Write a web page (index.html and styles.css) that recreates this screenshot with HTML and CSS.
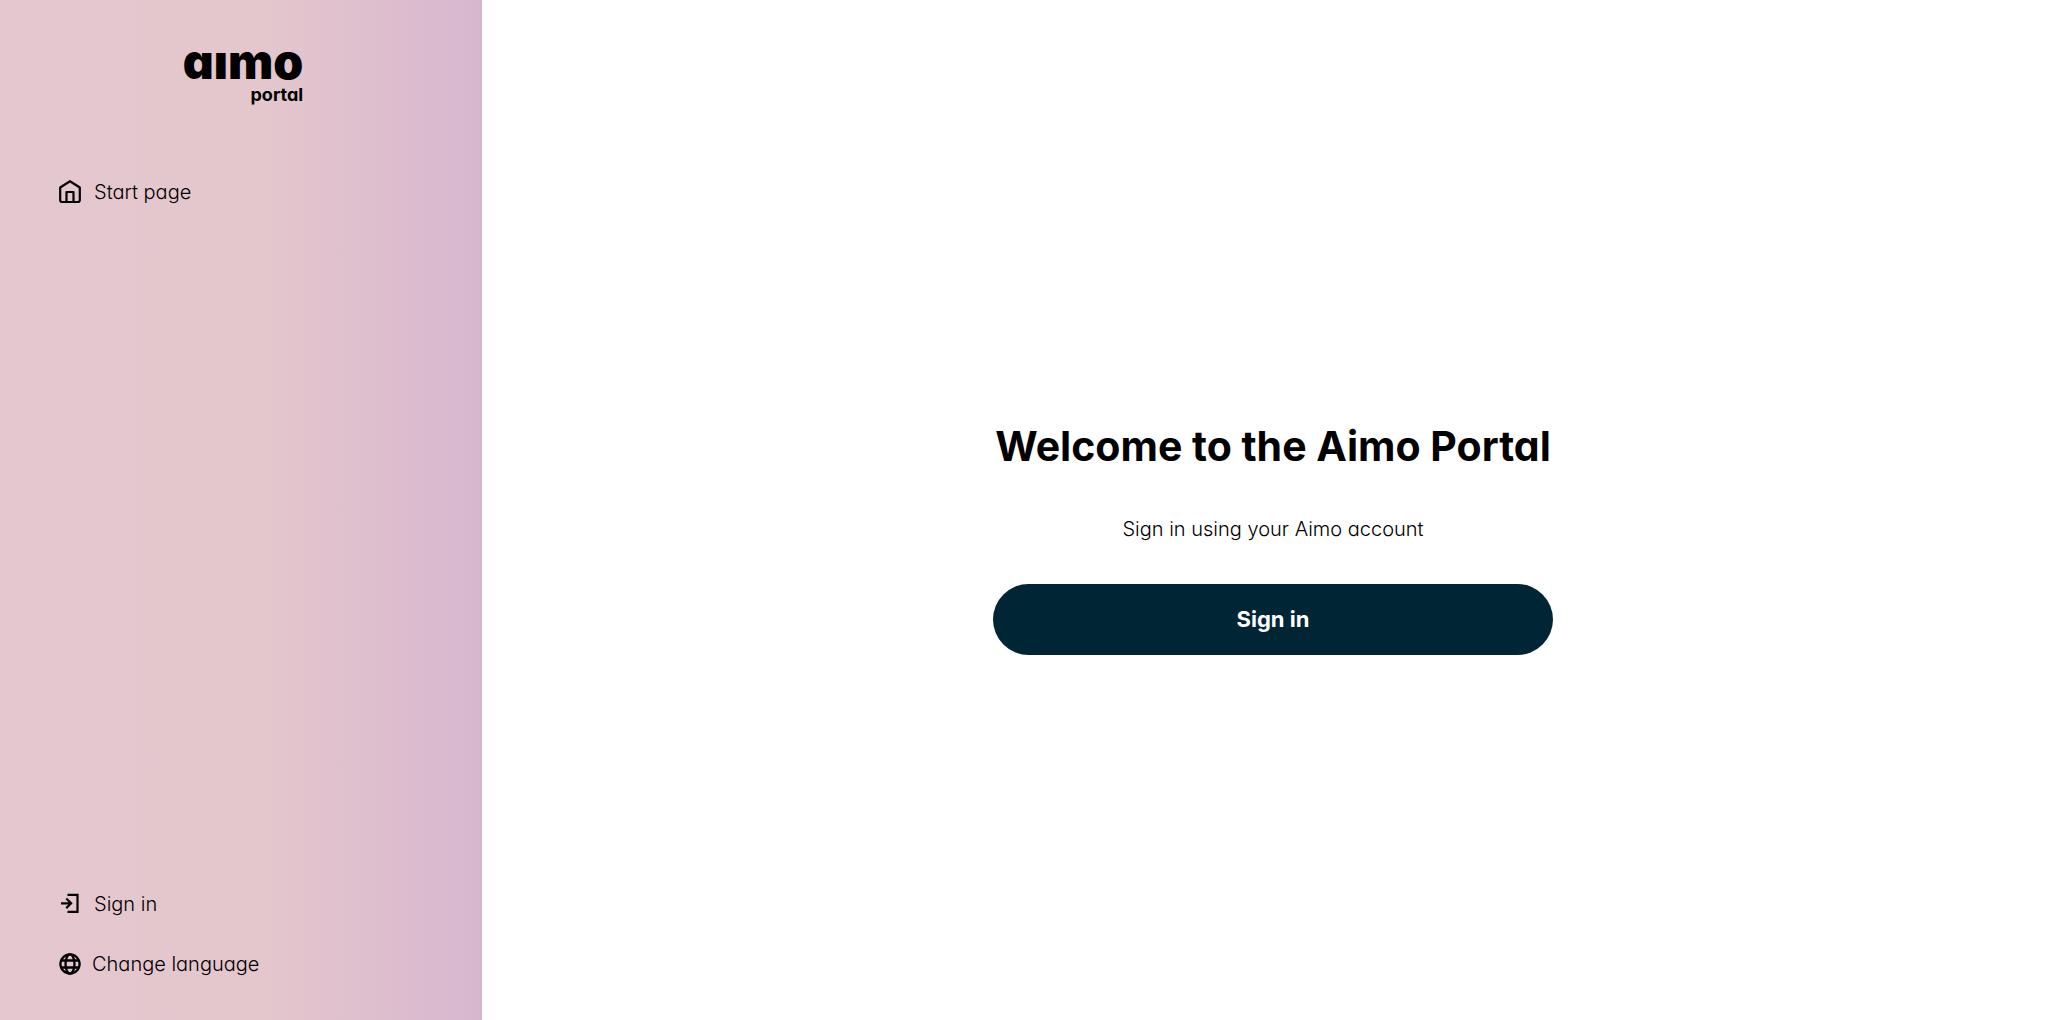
FILE: index.html
```
<!DOCTYPE html>
<html lang="en">
<head>
  <meta charset="UTF-8">
  <meta name="viewport" content="width=device-width, initial-scale=1">
  <title>Aimo Portal</title>
  <link rel="stylesheet" href="styles.css">
</head>
<body>
  <aside class="sidebar">
    <div class="logo">
      <span class="logo-name">aımo</span>
      <span class="logo-sub">portal</span>
    </div>
    <nav class="menu">
      <a class="menu-item" href="#">
        <svg class="icon" viewBox="0 0 24 24" fill="none" stroke="currentColor" stroke-width="2.200" stroke-linejoin="round">
          <path d="M2.200 7.500 12 1.200l9.800 6.300v12.500a2 2 0 0 1-2 2H4.200a2 2 0 0 1-2-2z"/>
          <path d="M8.500 21.500V12h7v9.500"/>
        </svg>
        Start page
      </a>
      <div class="menu-bottom">
        <a class="menu-item" href="#">
          <svg class="icon" viewBox="0 0 24 24" fill="none" stroke="currentColor" stroke-width="2.200">
            <path d="M9.500 2.800H19.500v17H9.500"/>
            <path d="M3 11.300h10M8.300 6.500l4.800 4.800-4.800 4.800"/>
          </svg>
          Sign in
        </a>
        <button class="menu-item language" type="button">
          <svg class="icon" viewBox="0 0 24 24" fill="none" stroke="currentColor" stroke-width="2.300">
            <circle cx="12" cy="12" r="9.600"/>
            <ellipse cx="12" cy="12" rx="4.500" ry="9.600"/>
            <path d="M3 8.500h18M3 15.500h18"/>
          </svg>
          Change language
        </button>
      </div>
    </nav>
  </aside>
  <main class="content">
    <section class="welcome">
      <h1>Welcome to the Aimo Portal</h1>
      <p>Sign in using your Aimo account</p>
      <button class="sign-in" type="button">Sign in</button>
    </section>
  </main>
</body>
</html>
```

FILE: styles.css
```
* {
  box-sizing: border-box;
}
body {
  display: flex;
  min-height: 100vh;
  margin: 0;
  font-family: Inter, sans-serif;
  font-size: 20px;
  font-weight: 300;
  line-height: 28px;
  /* single-storey "a" */
  font-feature-settings: "cv11";
  color: #000;
  background-color: #fff;
}
.sidebar {
  display: flex;
  flex-direction: column;
  width: 482px;
  padding: 40px 54px 42px 58px;
  background: linear-gradient(90deg, #e5c8cf 0%, #e4c6cd 55%, #d7b7ce 100%);
}
.logo {
  display: flex;
  flex-direction: column;
  align-items: flex-end;
  align-self: center;
}
.logo-name {
  font-size: 48px;
  font-weight: 900;
  line-height: 44px;
}
.logo-sub {
  font-size: 18px;
  font-weight: 700;
  line-height: 22px;
}
.menu {
  display: flex;
  flex: 1;
  flex-direction: column;
  justify-content: space-between;
  padding-top: 72px;
}
.menu-bottom {
  display: flex;
  flex-direction: column;
  align-items: flex-start;
  gap: 32px;
}
.menu-item {
  display: flex;
  align-items: center;
  gap: 12px;
  padding: 0;
  border: none;
  background: none;
  font: inherit;
  font-feature-settings: inherit;
  color: inherit;
  text-decoration: none;
  cursor: pointer;
}
.menu-item:hover {
  text-decoration: underline;
}
.language {
  gap: 10px;
}
.icon {
  width: 24px;
  height: 24px;
}
.content {
  display: flex;
  flex: 1;
  align-items: center;
  justify-content: center;
  padding: 54px 0 0 16px;
}
.welcome {
  display: flex;
  flex-direction: column;
  width: 560px;
  text-align: center;
}
h1 {
  margin: 0;
  font-size: 41px;
  font-weight: 700;
  line-height: 52px;
  white-space: nowrap;
}
.welcome p {
  margin: 43px 0 41px;
}
.sign-in {
  height: 71px;
  border: none;
  border-radius: 36px;
  background-color: #002635;
  font: inherit;
  font-size: 22px;
  font-weight: 700;
  color: #fff;
  cursor: pointer;
}
.sign-in:hover {
  background-color: #0a3a4d;
}
```
